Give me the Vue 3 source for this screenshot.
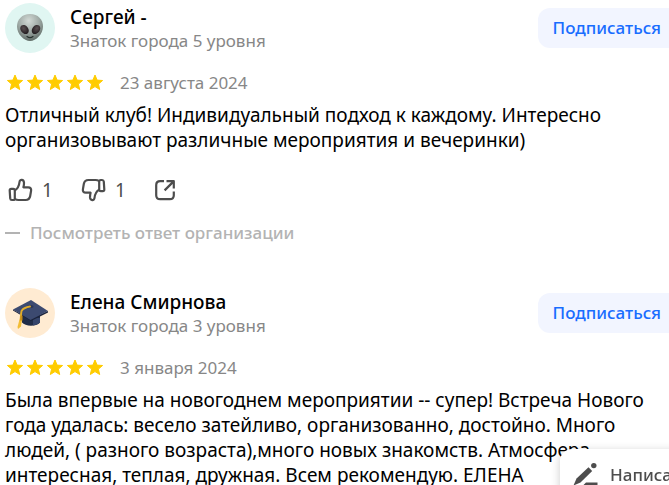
<script setup>
const reviews = [
  {
    id: 1,
    author: 'Сергей -',
    level: 'Знаток города 5 уровня',
    avatar: 'alien',
    date: '23 августа 2024',
    text: 'Отличный клуб! Индивидуальный подход к каждому. Интересно организовывают различные мероприятия и вечеринки)',
    likes: 1,
    dislikes: 1,
    hasAnswer: true
  },
  {
    id: 2,
    author: 'Елена Смирнова',
    level: 'Знаток города 3 уровня',
    avatar: 'cap',
    date: '3 января 2024',
    text: 'Была впервые на новогоднем мероприятии -- супер! Встреча Нового года удалась: весело затейливо, организованно, достойно. Много людей, ( разного возраста),много новых знакомств. Атмосфера интересная, теплая, дружная. Всем рекомендую. ЕЛЕНА',
    hasAnswer: false
  }
]
</script>

<template>
  <main class="reviews">
    <article v-for="r in reviews" :key="r.id" class="review">
      <header class="head">
        <div class="avatar" :class="r.avatar">
          <svg v-if="r.avatar === 'alien'" viewBox="0 0 50 50" aria-hidden="true">
            <defs>
              <radialGradient id="skin" cx="0.45" cy="0.25" r="0.8">
                <stop offset="0" stop-color="#d3dad6" />
                <stop offset="0.5" stop-color="#9fa9a5" />
                <stop offset="1" stop-color="#58645f" />
              </radialGradient>
              <radialGradient id="eye" cx="0.5" cy="0.35" r="0.7">
                <stop offset="0" stop-color="#5a5052" />
                <stop offset="1" stop-color="#1d171a" />
              </radialGradient>
            </defs>
            <path d="M25 11c8 0 13 5.500 13 12.500C38 31 31 38 25 38S12 31 12 23.500C12 16.500 17 11 25 11z" fill="url(#skin)" />
            <ellipse cx="19.500" cy="26.500" rx="3.800" ry="5" transform="rotate(-38 19.500 26.500)" fill="url(#eye)" />
            <ellipse cx="31" cy="26.500" rx="3.800" ry="5" transform="rotate(38 31 26.500)" fill="url(#eye)" />
            <path d="M22 33.500q3 2.200 6 0" fill="none" stroke="#26302c" stroke-width="1.200" stroke-linecap="round" />
          </svg>
          <svg v-else viewBox="0 0 50 50" aria-hidden="true">
            <path d="M17 24v10.500c3 4 14 4.500 18 0V24z" fill="#202c48" />
            <path d="M28 30h7v4.500c-2 2-4 2.500-7 3z" fill="#35446a" />
            <path d="M8 21.500 25 31l18-8v1.500L26 33 8 22.500z" fill="#1a233b" />
            <path d="M8 21.500 26 12l17 11-17.500 9z" fill="#3c4a70" />
            <ellipse cx="25.500" cy="18.500" rx="3" ry="1.500" fill="#2c3858" />
            <path d="M25 18.500c-4 .5-7 2-8.500 4.500-.6 3-.8 7-1 10" fill="none" stroke="#e2ad2b" stroke-width="1.900" stroke-linecap="round" />
            <path d="M14.500 31.500h2.500l-1 7-3 2.500-.5-2z" fill="#f3bd35" />
            <path d="M15.500 27.500h2v5h-2.500z" fill="#c78d18" />
          </svg>
        </div>
        <div class="who">
          <a class="name" href="#">{{ r.author }}</a>
          <span class="level">{{ r.level }}</span>
        </div>
        <button class="subscribe" type="button">Подписаться</button>
      </header>
      <div class="meta">
        <span class="stars" role="img" aria-label="Оценка 5 из 5">
          <svg v-for="n in 5" :key="n" viewBox="0 0 20 20" aria-hidden="true">
            <path d="M10 2l2.100 5.100 5.500.4-4.200 3.600 1.300 5.400-4.700-2.900-4.700 2.900 1.300-5.400-4.200-3.600 5.500-.4z" fill="#ffcc00" stroke="#ffcc00" stroke-width="1" stroke-linejoin="round" />
          </svg>
        </span>
        <time>{{ r.date }}</time>
      </div>
      <p class="text">{{ r.text }}</p>
      <div v-if="r.likes" class="actions">
        <button type="button" aria-label="Нравится">
          <svg viewBox="0 0 28 28" aria-hidden="true">
            <g class="line">
              <path d="M6.200 12.800h2q1.600 0 1.600 1.600v8q0 1.600-1.600 1.600h-1.300q-1.500 0-1.700-1.600l-.5-7.900q0-1.700 1.500-1.700z" />
              <path d="M9.800 14.400c3-1.800 4.300-4.300 4.700-8.400.3-3 4.200-2.700 4.500.6.100 1.700-.2 3.200-.6 4.700h4.800c2.200 0 3.200 1.400 2.900 3.400l-.9 5.300c-.5 2.700-2 4-4.600 4h-7.200c-1.500 0-2.600-.5-3.600-1.200" />
            </g>
          </svg>
          <span>{{ r.likes }}</span>
        </button>
        <button type="button" aria-label="Не нравится">
          <svg viewBox="0 0 28 28" aria-hidden="true">
            <g class="line" transform="rotate(180 15.500 14)">
              <path d="M6.200 12.800h2q1.600 0 1.600 1.600v8q0 1.600-1.600 1.600h-1.300q-1.500 0-1.700-1.600l-.5-7.900q0-1.700 1.500-1.700z" />
              <path d="M9.800 14.400c3-1.800 4.300-4.300 4.700-8.400.3-3 4.200-2.700 4.500.6.100 1.700-.2 3.200-.6 4.700h4.800c2.200 0 3.200 1.400 2.900 3.400l-.9 5.300c-.5 2.700-2 4-4.600 4h-7.200c-1.500 0-2.600-.5-3.600-1.200" />
            </g>
          </svg>
          <span>{{ r.dislikes }}</span>
        </button>
        <button type="button" aria-label="Поделиться">
          <svg viewBox="0 0 28 28" aria-hidden="true">
            <path class="line" d="M13 5.200H9.200Q5.200 5.200 5.200 9.200v10q0 4 4 4h9.600q4 0 4-4V15.500M15.500 5.200h7.300v7.300M22.600 5.400l-9 9" />
          </svg>
        </button>
      </div>
      <button v-if="r.hasAnswer" class="answer" type="button">
        <span class="dash"></span>Посмотреть ответ организации
      </button>
    </article>
    <button class="write" type="button">
      <svg viewBox="0 0 28 28" aria-hidden="true">
        <path d="M1.500 25.500 4.500 18.500 16.500 7.200l3.700 3.700L8.500 22.600z" fill="#4d4d4d" />
        <circle cx="21.800" cy="5.600" r="2.700" fill="#4d4d4d" />
        <path d="M14 22.500h11.500V25H11.500z" fill="#4d4d4d" />
      </svg>
      <span>Написать</span>
    </button>
  </main>
</template>

<style>
body {
  margin: 0;
  background: #fff;
  overflow: hidden;
}
</style>

<style scoped>
.reviews {
  font-family: "Noto Sans", "Open Sans", sans-serif;
  color: #000;
}
.review {
  padding: 3px 5px 40px;
}
button {
  font: inherit;
  border: 0;
  padding: 0;
  background: none;
  cursor: pointer;
}
.head {
  display: flex;
  align-items: center;
  margin-right: -5px;
}
.avatar {
  width: 50px;
  height: 50px;
  border-radius: 50%;
  flex: none;
}
.avatar svg {
  display: block;
}
.alien {
  background: #e0f6f2;
}
.cap {
  background: #ffebd2;
}
.who {
  flex: 1;
  margin-left: 15px;
  padding-top: 2px;
  display: flex;
  flex-direction: column;
}
.name {
  color: #000;
  text-decoration: none;
  font-size: 19px;
  font-weight: 500;
  line-height: 24px;
}
.level {
  font-size: 17px;
  line-height: 24px;
  color: #878787;
}
.subscribe {
  height: 40px;
  padding: 0 8px 2px 15px;
  border-radius: 12px 0 0 12px;
  background: #f2f5ff;
  color: #196dff;
  font-size: 17px;
  font-weight: 500;
}
.meta {
  display: flex;
  align-items: center;
  gap: 15px;
  height: 24px;
  margin-top: 18px;
}
.stars {
  display: flex;
}
.stars svg {
  width: 20px;
  height: 20px;
}
time {
  font-size: 17px;
  line-height: 24px;
  color: #878787;
}
.text {
  margin: 8px 0 0;
  font-size: 19px;
  line-height: 25px;
}
.actions {
  display: flex;
  gap: 25px;
  margin-top: 23px;
}
.actions button {
  display: flex;
  align-items: center;
  gap: 9px;
  font-size: 19px;
  line-height: 28px;
  color: #4d4d4d;
}
.actions svg {
  width: 28px;
  height: 28px;
}
.line {
  fill: none;
  stroke: #4d4d4d;
  stroke-width: 2.200;
  stroke-linejoin: round;
}
.answer {
  display: flex;
  align-items: center;
  gap: 10px;
  margin-top: 17px;
  font-size: 17px;
  font-weight: 500;
  line-height: 24px;
  color: #b3b3b3;
}
.dash {
  width: 15px;
  height: 2px;
  background: #b3b3b3;
}
.write {
  position: fixed;
  left: calc(100% - 109px);
  bottom: -14px;
  height: 50px;
  padding: 0 16px 0 12px;
  display: flex;
  align-items: center;
  gap: 10px;
  border-radius: 12px;
  background: #fff;
  box-shadow: 0 2px 10px rgba(0, 0, 0, 0.2);
  color: #4d4d4d;
  font-size: 17px;
  font-weight: 500;
  white-space: nowrap;
}
.write svg {
  width: 28px;
  height: 28px;
  flex: none;
}
</style>
